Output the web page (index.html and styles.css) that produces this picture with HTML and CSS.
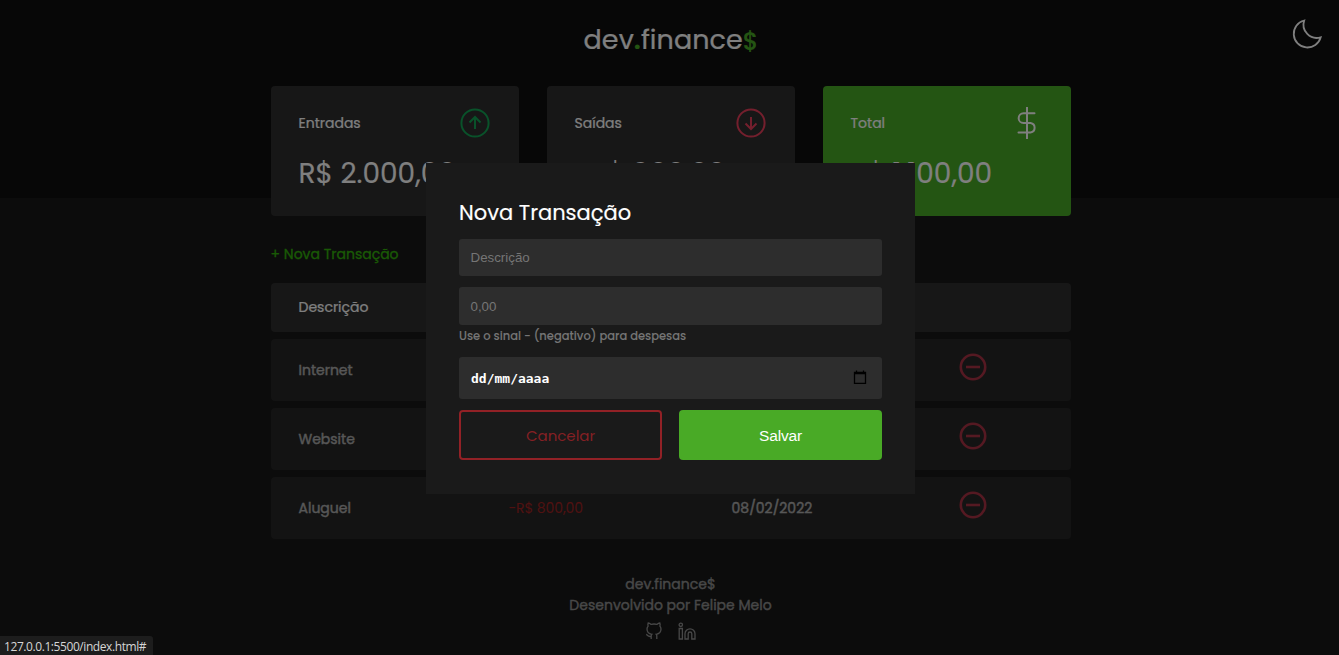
FILE: index.html
```html
<!DOCTYPE html>
<html lang="pt-BR">
<head>
<meta charset="utf-8">
<title>dev.finance$</title>
<link rel="stylesheet" href="styles.css">
</head>
<body>
<header class="header">
  <h1 class="logo">dev<b>.</b>finance<b class="cash">$</b></h1>
  <svg class="moon" viewBox="0 0 32 32"><path d="M12.200 3.500A13.700 13.700 0 1 0 28.700 20.300A13.200 13.200 0 0 1 12.200 3.500Z"/></svg>
</header>
<main class="container">
  <section class="balance">
    <div class="card">
      <h3 class="card-head"><span>Entradas</span>
        <svg class="icon income" viewBox="0 0 32 32"><circle cx="16" cy="16" r="13.6"/><path d="M16 22V10.5M10.5 15.5L16 10L21.500 15.500"/></svg></h3>
      <p class="amount">R$ 2.000,00</p>
    </div>
    <div class="card">
      <h3 class="card-head"><span>Saídas</span>
        <svg class="icon expense" viewBox="0 0 32 32"><circle cx="16" cy="16" r="13.6"/><path d="M16 10V21.500M10.500 16.500L16 22L21.500 16.500"/></svg></h3>
      <p class="amount">-R$ 900,00</p>
    </div>
    <div class="card total">
      <h3 class="card-head"><span>Total</span>
        <svg class="icon dollar" viewBox="0 0 32 32"><path d="M16 .5V31.500M23.500 6.300H12.500a4.800 4.800 0 0 0 0 9.700h7a4.800 4.800 0 0 1 0 9.500H7.500"/></svg></h3>
      <p class="amount">R$ 1.100,00</p>
    </div>
  </section>
  <a class="new" href="#">+ Nova Transação</a>
  <section class="table">
    <div class="row head"><span>Descrição</span><span>Valor</span><span>Data</span><span></span></div>
    <div class="row"><span>Internet</span><span class="neg">-R$ 50,00</span><span>06/02/2022</span>
      <svg class="minus" viewBox="0 0 28 28"><circle cx="14" cy="14" r="12.200"/><path d="M7 14H21"/></svg></div>
    <div class="row"><span>Website</span><span class="neg">-R$ 50,00</span><span>07/02/2022</span>
      <svg class="minus" viewBox="0 0 28 28"><circle cx="14" cy="14" r="12.200"/><path d="M7 14H21"/></svg></div>
    <div class="row"><span>Aluguel</span><span class="neg">-R$ 800,00</span><span>08/02/2022</span>
      <svg class="minus" viewBox="0 0 28 28"><circle cx="14" cy="14" r="12.200"/><path d="M7 14H21"/></svg></div>
  </section>
</main>
<footer class="footer">
  <p>dev.finance$</p>
  <p>Desenvolvido por Felipe Melo</p>
  <div class="social">
    <svg viewBox="0 0 18 18"><path d="M6.200 17v-2.700c-3.200 1-3.700-1.500-5-1.900M11.800 17v-3c0-.9-.2-1.300-.6-1.700 3-.4 4.800-1.700 4.800-5.200 0-1.200-.4-2.200-1.100-3 .3-.9.300-2-.1-3.100-1.200 0-2.300.8-3 1.400a10.500 10.500 0 0 0-5.600 0C5.500 1.800 4.400 1 3.200 1c-.4 1.100-.4 2.200-.1 3.100-.7.800-1.100 1.800-1.100 3 0 3.500 1.800 4.800 4.800 5.200-.4.400-.6 1-.6 2"/></svg>
    <svg viewBox="0 0 18 18"><circle cx="2.800" cy="2.800" r="1.700"/><path d="M1.200 6.500h3.200V17H1.200zM7 17v-5.200a5 5 0 0 1 10 0V17h-3.200v-5.200a1.800 1.800 0 0 0-3.600 0V17z"/></svg>
  </div>
</footer>
<div class="overlay">
  <div class="modal">
    <h2 class="title">Nova Transação</h2>
    <form class="form">
      <div class="field">Descrição</div>
      <div class="field value">0,00</div>
      <small class="help">Use o sinal - (negativo) para despesas</small>
      <div class="field day"><span>dd/mm/aaaa</span>
        <svg class="calendar" viewBox="0 0 14 14"><path d="M1.500 2.500H12.500V13.500H1.500zM3.500 .5V3M10.500 .5V3M1.500 3.500H12.500"/></svg></div>
      <div class="actions">
        <a class="button cancel" href="#">Cancelar</a>
        <button class="button save" type="button">Salvar</button>
      </div>
    </form>
  </div>
</div>
<div class="status">127.0.0.1:5500/index.html#</div>
</body>
</html>
```
FILE: styles.css
```css
* { box-sizing: border-box; margin: 0; padding: 0; }
body {
  height: 655px;
  overflow: hidden;
  background: #181818;
  color: #fff;
  font-family: Poppins, Inter, sans-serif;
  font-size: 14px;
}
a { text-decoration: none; }
svg { fill: none; stroke: currentColor; flex: none; }
.header { position: relative; height: 198px; padding-top: 19px; background: #0e0e0e; text-align: center; }
.logo { font-size: 27px; line-height: 42px; font-weight: 400; padding-left: 3px; letter-spacing: .05px; -webkit-text-stroke: .2px; }
.logo b { color: #49aa26; font-weight: 600; }
.logo .cash { font-size: 24px; line-height: 1; font-weight: 500; vertical-align: -1px; }
.moon { position: absolute; left: 1292px; top: 17px; width: 32px; height: 32px; stroke-width: 1.8; }
.container { width: 800px; margin: -112px 0 0 271px; position: relative; }
.balance { display: grid; grid-template-columns: repeat(3, 248px); gap: 28px; }
.card { height: 130px; padding: 20px 28px 0 27.5px; border-radius: 4px; background: #2e2e2e; }
.card.total { background: #49aa26; }
.card-head { display: flex; justify-content: space-between; align-items: center; height: 34px; font-size: 14px; font-weight: 400; -webkit-text-stroke: .2px; }
.icon { width: 32px; height: 32px; stroke-width: 2; }
.income { color: #12a454; }
.expense { color: #e83f5b; }
.dollar { stroke-linecap: round; }
.amount { margin-top: 13px; font-size: 28px; line-height: 42px; white-space: nowrap; -webkit-text-stroke: .1px; }
.new { display: block; margin: 26px 0 0 -.5px; line-height: 22px; padding-top: 1px; height: 22px; line-height: 21px; color: #33b30a; -webkit-text-stroke: .3px; }
.balance + .new { margin-top: 27px; }
.table { display: grid; gap: 7px; margin-top: 18px; }
.row { display: grid; grid-template-columns: 210px 223px 227.5px 1fr; align-items: center; height: 62px; padding-left: 27.5px; border-radius: 4px; background: #2e2e2e; opacity: .65; -webkit-text-stroke: .35px; }
.head { height: 49px; opacity: 1; -webkit-text-stroke: .2px; }
.neg { color: #e92929; letter-spacing: -.1px; -webkit-text-stroke: 0; }
.minus { width: 28px; height: 28px; margin-top: -6px; color: #f8405c; stroke-width: 2.600; }
.footer { width: 400px; margin: 35px 0 0 470.5px; text-align: center; line-height: 21px; color: #909090; -webkit-text-stroke: .4px; }
.social { display: flex; justify-content: center; gap: 15px; margin-top: 6px; }
.social svg { width: 18px; height: 18px; stroke-width: 1.300; }
.overlay { position: fixed; inset: 0; display: flex; align-items: center; justify-content: center; padding: 1px 0 0 2px; background: rgba(0, 0, 0, .5); }
.modal { width: 489px; height: 331px; padding: 33px 33px 0; background: #1a1a1a; }
.title { font-size: 21px; line-height: 34px; font-weight: 400; margin-bottom: 9px; -webkit-text-stroke: .15px; }
.field { height: 37px; padding: 0 12px 0 11.5px; display: flex; align-items: center; border-radius: 3px; background: #2d2d2d; color: #757575; font: 13.333px "Liberation Sans", sans-serif; }
.value { height: 38px; margin-top: 11px; padding-top: 1px; }
.help { display: block; height: 32px; font-size: 11.500px; line-height: 22px; color: #757575; font-weight: 500; -webkit-text-stroke: .1px; }
.day { height: 42px; justify-content: space-between; padding: 2px 12px 0; color: #fff; font: bold 13px "DejaVu Sans Mono", monospace; }
.calendar { width: 14px; height: 14px; margin: -4px 3px 0 0; color: #000; stroke-width: 1.300; }
.actions { display: grid; grid-template-columns: 1fr 1fr; gap: 17px; margin-top: 11px; }
.button { height: 50px; display: flex; align-items: center; justify-content: center; border: 0; border-radius: 4px; }
.cancel { border: 2px solid #922126; color: #852024; font-size: 15px; padding-top: 2px; }
.save { background: #49aa26; color: #fff; font: 15.500px "Liberation Sans", sans-serif; letter-spacing: -.15px; padding-top: 2px; }
.status { position: fixed; left: 0; bottom: 0; width: 153px; height: 19px; padding-left: 4px; border-radius: 0 3px 0 0; background: #1d1d1d; color: #d6d6d6; font: 12px/22px "Open Sans", sans-serif; letter-spacing: -.42px; }
```
